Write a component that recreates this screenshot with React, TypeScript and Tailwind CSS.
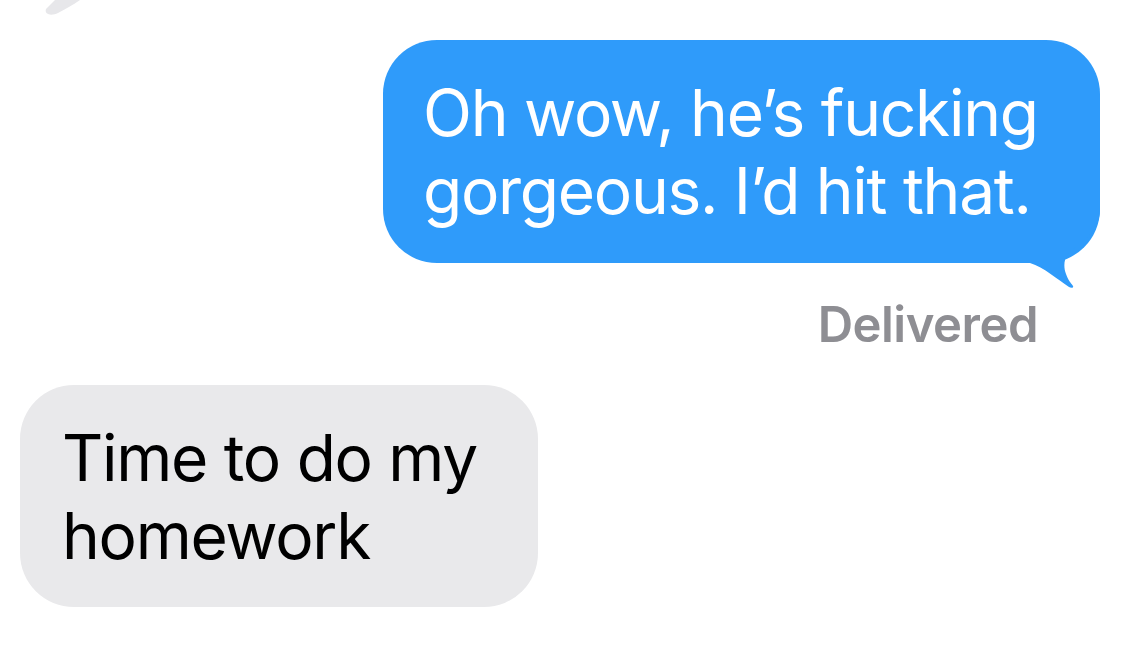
export default function App() {
    return (
        <div className="relative w-[1135px] h-[668px] overflow-hidden bg-white font-['Inter',sans-serif]">
            {/* tail of the previous incoming bubble, cut off by the top edge */}
            <svg className="absolute left-0 top-0" width="90" height="20" viewBox="0 0 90 20">
                <path d="M46 9 C44 15 52 16 58 13 C66 9 74 4 80 0 L55 0 C52 3 49 6 46 9 Z" fill="#e7e7ea" />
            </svg>

            <div className="flex flex-col pt-[40px]">
                {/* outgoing */}
                <div className="flex justify-end pr-[35px]">
                    <div className="relative w-[717px] h-[223px] rounded-[54px] bg-[#2f9bfa] pl-[40px] pt-[34px]">
                        <p className="relative z-10 text-[64px] leading-[78px] tracking-[-0.02em] text-white">
                            Oh wow, he’s fucking
                            <br />
                            gorgeous. I’d hit that.
                        </p>
                        <svg className="absolute right-0 bottom-[-27px]" width="80" height="90" viewBox="0 0 80 90">
                            <path
                                d="M0 0 L80 0 L80 10 C80 30 62 42 50 52 C44 57 43 66 46 74 C48 80 51 83 53 86 C54 88 51 88 49 87 C38 80 24 67 10 63 L0 63 Z"
                                fill="#2f9bfa"
                            />
                        </svg>
                    </div>
                </div>

                <div className="flex justify-end pr-[97px] mt-[34px]">
                    <span className="text-[49px] leading-[56px] font-semibold tracking-[-0.01em] text-[#8e8e93]">Delivered</span>
                </div>

                {/* incoming */}
                <div className="flex pl-[20px] mt-[32px]">
                    <div className="w-[518px] h-[222px] rounded-[54px] bg-[#e9e9eb] pl-[42px] pt-[34px]">
                        <p className="text-[64px] leading-[78px] tracking-[-0.02em] text-black">
                            Time to do my
                            <br />
                            homework
                        </p>
                    </div>
                </div>
            </div>
        </div>
    );
}
